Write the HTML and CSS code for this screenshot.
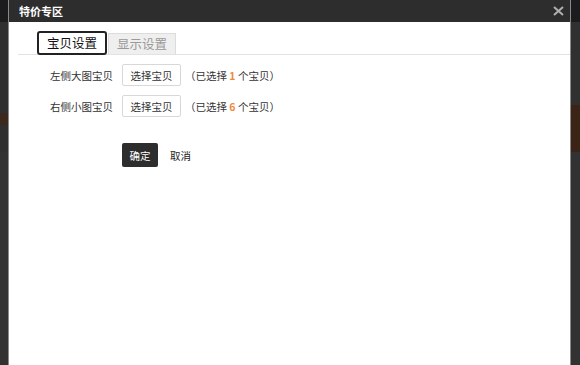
FILE: index.html
```html
<!DOCTYPE html>
<html lang="zh-CN">
<head>
    <meta charset="UTF-8">
    <meta name="viewport" content="width=device-width, initial-scale=1.0">
    <title>特价专区</title>
    <link rel="stylesheet" href="styles.css">
</head>
<body>
    <div class="page">
        <div class="page-bar"></div>
        <div class="page-band">
            <div class="band-left"></div>
            <div class="band-right"></div>
        </div>
        <div class="page-rest"></div>
    </div>
    <div class="dialog">
        <div class="dialog-head">
            <span class="dialog-title">特价专区</span>
            <span class="dialog-close">
                <svg width="11" height="10" viewBox="0 0 11 10"><path d="M1 1 L10 9 M10 1 L1 9" stroke="#b0b0b0" stroke-width="2"/></svg>
            </span>
        </div>
        <div class="dialog-body">
            <div class="tabs">
                <span class="tab tab-active">宝贝设置</span>
                <span class="tab">显示设置</span>
            </div>
            <div class="rows">
                <div class="row">
                    <span class="row-label">左侧大图宝贝</span>
                    <button class="pick-btn">选择宝贝</button>
                    <span class="row-info">（已选择 <b>1</b> 个宝贝）</span>
                </div>
                <div class="row">
                    <span class="row-label">右侧小图宝贝</span>
                    <button class="pick-btn">选择宝贝</button>
                    <span class="row-info">（已选择 <b>6</b> 个宝贝）</span>
                </div>
            </div>
            <div class="actions">
                <button class="ok-btn">确定</button>
                <span class="cancel">取消</span>
            </div>
        </div>
    </div>
</body>
</html>
```

FILE: styles.css
```css
body {
    margin: 0;
    background-color: #303030;
    font-family: "Noto Sans CJK SC", "Liberation Sans", sans-serif;
    overflow: hidden;
}
.page {
    height: 365px;
    display: flex;
    flex-direction: column;
}
.page-bar {
    height: 22px;
    background: #1c1c1e;
}
.page-band {
    margin-top: 83px;
    height: 47px;
    display: flex;
    justify-content: space-between;
}
.band-left {
    width: 9px;
    height: 12px;
    margin-top: 8px;
    background: #3b2a1d;
}
.band-right {
    width: 10px;
    height: 47px;
    background: #3b2416;
}
.page-rest {
    flex: 1;
    background: #323232;
}
.dialog {
    position: absolute;
    left: 8px;
    top: 0;
    width: 561px;
    height: 380px;
    border-left: 1px solid #8a8a8a;
    border-right: 1px solid #8a8a8a;
    background: #fff;
}
.dialog-head {
    height: 22px;
    background: #2d2d2d;
    display: flex;
    align-items: center;
    justify-content: space-between;
    padding: 0 6px 0 10px;
}
.dialog-title {
    color: #fff;
    font-size: 11px;
    font-weight: bold;
}
.dialog-close {
    display: flex;
}
.tabs {
    margin: 9px 0 0 9px;
    padding-left: 19px;
    height: 23px;
    border-bottom: 1px solid #e2e2e2;
    display: flex;
    align-items: flex-end;
    gap: 1px;
}
.tab {
    height: 20px;
    padding: 0 8px;
    font-size: 12.5px;
    line-height: 20px;
    color: #999;
    background: #efefef;
    border: 1px solid #dcdcdc;
    border-bottom: none;
}
.tab-active {
    height: 20px;
    margin-bottom: -1px;
    color: #111;
    background: #fff;
    border: 2px solid #222;
    border-radius: 3px;
    line-height: 20px;
}
.rows {
    margin-top: 9px;
    display: flex;
    flex-direction: column;
    gap: 9px;
}
.row {
    display: flex;
    align-items: center;
    height: 22px;
    font-size: 10.5px;
    color: #333;
}
.row-label {
    width: 104px;
    text-align: right;
}
.pick-btn {
    margin-left: 9px;
    width: 59px;
    height: 22px;
    padding: 0;
    background: #fff;
    border: 1px solid #d8d8d8;
    border-radius: 2px;
    font-family: inherit;
    font-size: 10.5px;
    color: #333;
}
.row-info {
    margin-left: 4px;
}
.row-info b {
    color: #f0873a;
}
.actions {
    margin: 26px 0 0 113px;
    display: flex;
    align-items: center;
    gap: 12px;
}
.ok-btn {
    width: 36px;
    height: 24px;
    padding: 0;
    background: #2d2d2d;
    border: none;
    border-radius: 2px;
    color: #fff;
    font-family: inherit;
    font-size: 10.5px;
}
.cancel {
    font-size: 10.5px;
    color: #222;
}
```
